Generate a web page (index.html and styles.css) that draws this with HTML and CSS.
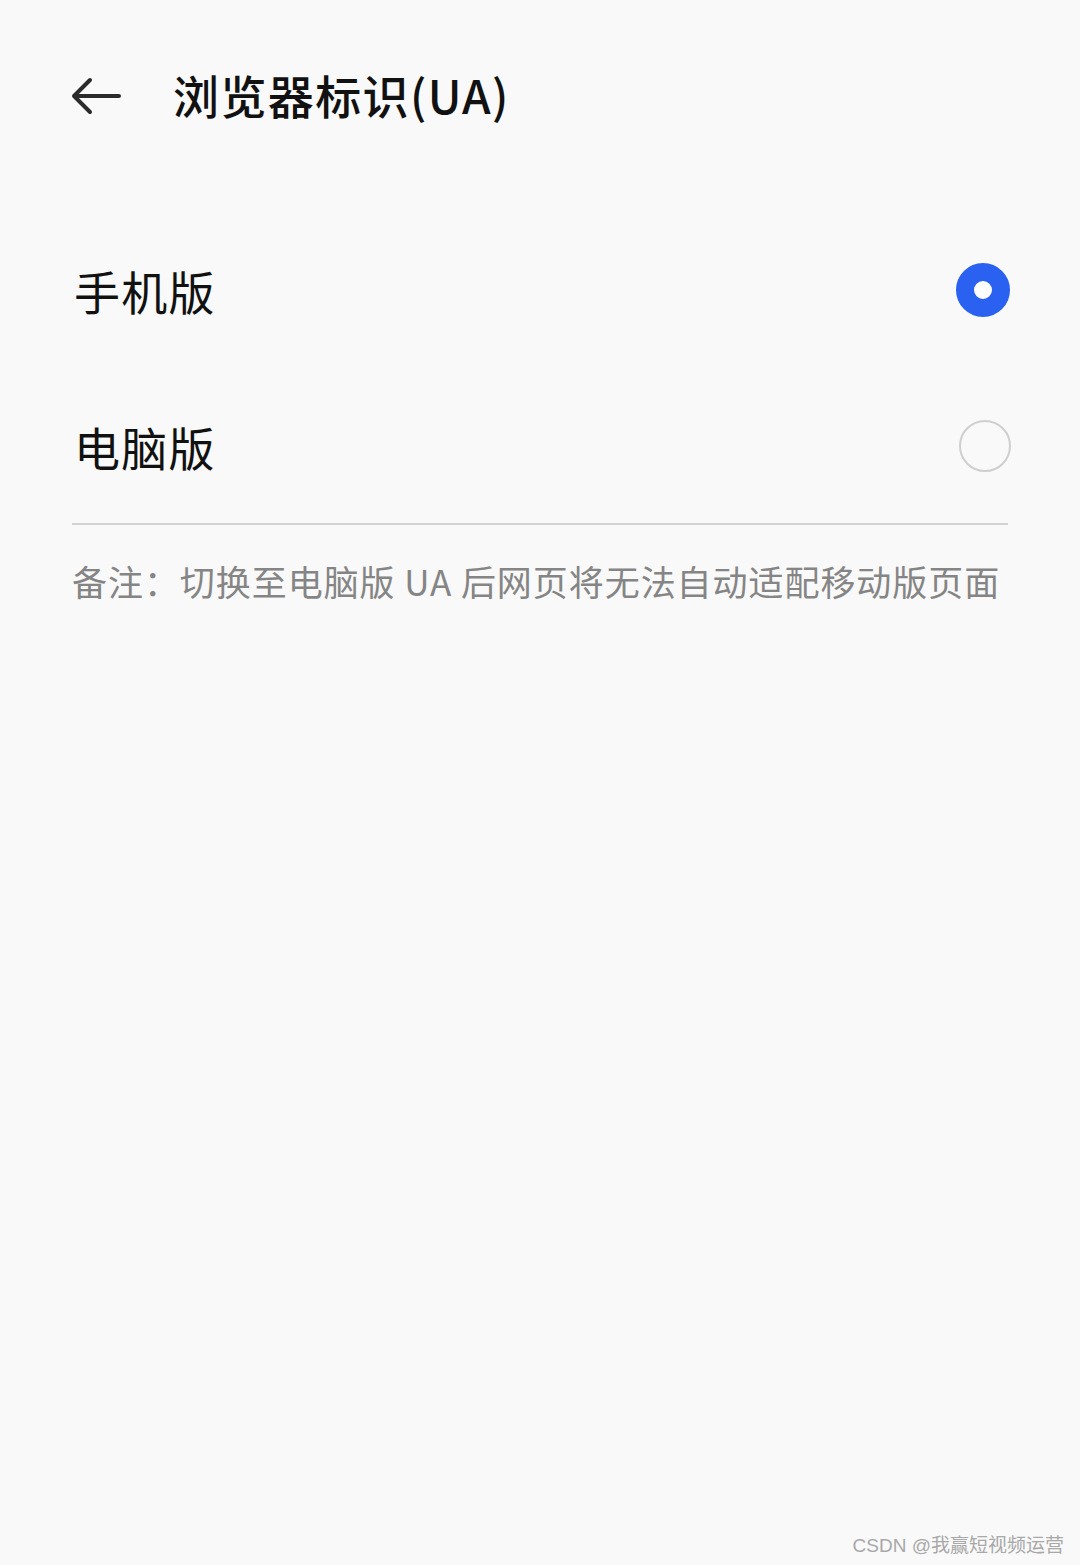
FILE: index.html
```
<!DOCTYPE html>
<html lang="zh">
<head>
<meta charset="utf-8">
<link rel="stylesheet" href="styles.css">
</head>
<body>
<div class="page">
  <header class="topbar">
    <svg class="back" width="54" height="40" viewBox="0 0 54 40">
      <path d="M50 20 H5 M21 4 L5 20 L21 36" fill="none" stroke="#2b2b2b" stroke-width="4" stroke-linecap="round" stroke-linejoin="round"/>
    </svg>
    <h1 class="title">浏览器标识(UA)</h1>
  </header>
  <div class="options">
    <div class="option">
      <span class="label">手机版</span>
      <span class="radio checked"></span>
    </div>
    <div class="option">
      <span class="label">电脑版</span>
      <span class="radio"></span>
    </div>
  </div>
  <div class="divider"></div>
  <p class="note">备注：切换至电脑版 UA 后网页将无法自动适配移动版页面</p>
</div>
<div class="watermark">CSDN @我赢短视频运营</div>
</body>
</html>
```
FILE: styles.css
```
html, body {
  margin: 0;
  padding: 0;
  background: #f9f9f9;
}
body {
  width: 1080px;
  height: 1565px;
  position: relative;
  font-family: "Noto Sans CJK SC", "Noto Sans", sans-serif;
  overflow: hidden;
}
.page {
  padding: 0 72px;
}
.topbar {
  display: flex;
  align-items: flex-start;
  box-sizing: border-box;
  margin-top: -2px;
  height: 194px;
  padding-top: 66px;
}
.back {
  display: block;
  margin-left: -3px;
  margin-top: 12px;
}
.title {
  margin: 0 0 0 50px;
  font-size: 46px;
  font-weight: 500;
  color: #111;
  line-height: 60px;
  letter-spacing: 1.4px;
}
.options {
  display: flex;
  flex-direction: column;
}
.option {
  display: flex;
  align-items: center;
  justify-content: space-between;
  height: 156px;
}
.option:first-child {
  margin-top: 20px;
}
.label {
  font-size: 46px;
  color: #111;
  line-height: 60px;
  margin-left: 2px;
  letter-spacing: 1.3px;
}
.radio {
  width: 52px;
  height: 52px;
  border-radius: 50%;
  border: 2.5px solid #cfcfcf;
  box-sizing: border-box;
  margin-right: -3px;
}
.radio.checked {
  width: 54px;
  height: 54px;
  border: 18px solid #2a61f0;
  background: #fff;
  margin-right: -2px;
}
.divider {
  height: 2px;
  background: #d2d2d2;
  margin-top: -1px;
}
.note {
  margin: 33px 0 0 0;
  font-size: 35px;
  color: #858585;
  line-height: 46px;
  letter-spacing: 0.95px;
}
.watermark {
  position: absolute;
  right: 16px;
  bottom: 8px;
  font-family: "Liberation Sans", "Noto Sans CJK SC", sans-serif;
  font-size: 19px;
  color: #a8a8a8;
}
```
